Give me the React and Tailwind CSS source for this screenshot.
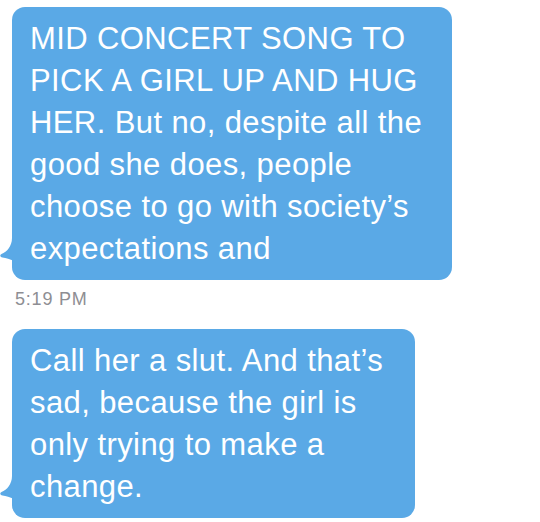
import React from 'react';

const lines1 = [
  'MID CONCERT SONG TO',
  'PICK A GIRL UP AND HUG',
  'HER. But no, despite all the',
  'good she does, people',
  'choose to go with society\u2019s',
  'expectations and',
];

const lines2 = [
  'Call her a slut. And that\u2019s',
  'sad, because the girl is',
  'only trying to make a',
  'change.',
];

const Tail = () => (
  <svg
    className="absolute left-[-12px] bottom-[19px]"
    width="14"
    height="23"
    viewBox="0 0 14 23"
  >
    <path
      d="M12 0 C12 8 7 14 1.5 16 C-0.5 16.8 0 19 2.5 19.6 C6 20.4 10 21 14 23 L14 0 Z"
      fill="#5aa9e6"
    />
  </svg>
);

const Bubble = ({ lines, width }) => (
  <div className={`relative ${width} rounded-[13px] bg-[#5aa9e6] pl-[18px] pt-[11px] pb-[10px]`}>
    <Tail />
    {lines.map((l, i) => (
      <div key={i} className="whitespace-nowrap text-[31px] leading-[42px] tracking-[0.4px] text-white">
        {l}
      </div>
    ))}
  </div>
);

export default function App() {
  return (
    <div className="h-[522px] w-[540px] overflow-hidden bg-white pl-[12px] pt-[7px] font-['Liberation_Sans',Arial,sans-serif]">
      <Bubble lines={lines1} width="w-[440px]" />
      <div className="mt-[9px] pl-[3px] text-[18px] leading-[20px] tracking-[0.8px] text-[#8e8e93]">5:19 PM</div>
      <div className="mt-[20px]">
        <Bubble lines={lines2} width="w-[403px]" />
      </div>
    </div>
  );
}
